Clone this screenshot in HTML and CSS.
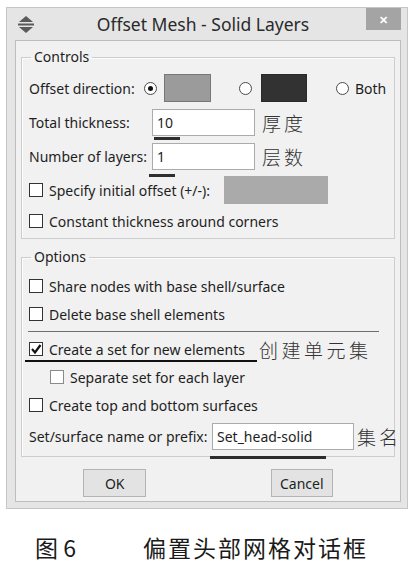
FILE: index.html
```html
<!doctype html>
<html>
<head>
  <meta charset="utf-8">
  <title>Offset Mesh - Solid Layers</title>
  <link rel="stylesheet" href="styles.css">
</head>
<body>
  <div class="page">
    <div class="window">
      <div class="titlebar">
        <svg class="app_icon" width="16" height="17" viewBox="0 0 16 17">
          <polygon points="8,0 15,6 1,6" fill="#5a5a5a"/>
          <rect x="0" y="7.5" width="16" height="2" fill="#5a5a5a"/>
          <polygon points="1,11 15,11 8,17" fill="#5a5a5a"/>
        </svg>
        <div class="title">Offset Mesh - Solid Layers</div>
        <div class="close">&#x2715;</div>
      </div>

      <div class="client">
        <fieldset class="group controls">
          <legend>Controls</legend>
          <div class="rows">
            <div class="row">
              <span class="label dir_label">Offset direction:</span>
              <span class="radio checked"></span>
              <span class="swatch light"></span>
              <span class="radio second"></span>
              <span class="swatch dark"></span>
              <span class="radio third"></span>
              <span class="radio_text">Both</span>
            </div>
            <div class="row">
              <span class="label field_label">Total thickness:</span>
              <span class="field small_field">10<i class="mark mark_thick"></i></span>
              <span class="note">厚度</span>
            </div>
            <div class="row">
              <span class="label field_label">Number of layers:</span>
              <span class="field small_field">1<i class="mark mark_layers"></i></span>
              <span class="note">层数</span>
            </div>
            <div class="row">
              <span class="check"></span>
              <span class="check_text">Specify initial offset (+/-):</span>
              <span class="disabled_field"></span>
            </div>
            <div class="row short">
              <span class="check"></span>
              <span class="check_text">Constant thickness around corners</span>
            </div>
          </div>
        </fieldset>

        <fieldset class="group options">
          <legend>Options</legend>
          <div class="rows">
            <div class="row short">
              <span class="check"></span>
              <span class="check_text">Share nodes with base shell/surface</span>
            </div>
            <div class="row short">
              <span class="check"></span>
              <span class="check_text">Delete base shell elements</span>
            </div>
            <div class="separator"></div>
            <div class="row short set_row">
              <span class="check">
                <svg width="12" height="12" viewBox="0 0 12 12"><path d="M2 6 L5 9.5 L10.5 2" fill="none" stroke="#111" stroke-width="2.2"/></svg>
              </span>
              <span class="check_text">Create a set for new elements</span>
              <span class="note wide">创建单元集</span>
              <i class="mark mark_set"></i>
            </div>
            <div class="row short indent">
              <span class="check light_check"></span>
              <span class="check_text">Separate set for each layer</span>
            </div>
            <div class="row short">
              <span class="check"></span>
              <span class="check_text">Create top and bottom surfaces</span>
            </div>
            <div class="row">
              <span class="label name_label">Set/surface name or prefix:</span>
              <span class="field name_field">Set_head-solid<i class="mark mark_name"></i></span>
              <span class="note wide">集名</span>
            </div>
          </div>
        </fieldset>

        <div class="buttons">
          <span class="button ok">OK</span>
          <span class="button">Cancel</span>
        </div>
      </div>
    </div>

    <div class="caption">
      <span class="fig_no">图 6</span>
      <span class="fig_title">偏置头部网格对话框</span>
    </div>
  </div>
</body>
</html>
```

FILE: styles.css
```css
* {
  box-sizing: border-box;
}
body {
  margin: 0;
  background: #fff;
  font-family: "Noto Sans", "Liberation Sans", sans-serif;
  font-size: 14px;
  color: #1e1e1e;
}
.page {
  padding: 7px 0 0 6px;
}

/* window frame */
.window {
  width: 402px;
  height: 502px;
  background: #e5e5e5;
  border: 1px solid #c6c6c6;
  padding: 0 6px 6px 8px;
  display: flex;
  flex-direction: column;
}
.titlebar {
  height: 32px;
  display: flex;
  align-items: center;
}
.app_icon {
  margin-left: 3px;
  flex: none;
}
.title {
  flex: 1;
  text-align: center;
  font-size: 17.5px;
  color: #2a2a2a;
  padding-left: 6px;
  white-space: nowrap;
}
.close {
  align-self: flex-start;
  width: 35px;
  height: 22px;
  background: #a4a4a4;
  color: #fff;
  font-size: 11px;
  font-weight: bold;
  display: flex;
  align-items: center;
  justify-content: center;
}
.client {
  flex: 1;
  background: #f1f1f1;
  border: 1px solid #bdbdbd;
  padding: 0 5px;
  display: flex;
  flex-direction: column;
}

/* groups */
.group {
  margin: 0;
  padding: 0 7px 6px 7px;
  border: 1px solid #cdcdcd;
  box-shadow: inset 1px 1px 0 #fbfbfb;
  min-width: 0;
}
.group legend {
  padding: 0 3px;
  margin-left: 2px;
  line-height: 16px;
}
.controls {
  margin-top: 8px;
}
.options {
  margin-top: 10px;
}
.rows {
  display: flex;
  flex-direction: column;
  gap: 6px;
  padding-top: 9px;
}
.options .rows {
  padding-top: 10px;
}
.row {
  height: 28px;
  display: flex;
  align-items: center;
  position: relative;
  white-space: nowrap;
}
.row > * {
  flex: none;
}
.row.short {
  height: 22px;
}
.indent {
  padding-left: 21px;
}

/* offset direction */
.dir_label {
  width: 115px;
}
.radio {
  width: 13px;
  height: 13px;
  border: 1px solid #4a4a4a;
  border-radius: 50%;
  background: #fff;
  display: flex;
  align-items: center;
  justify-content: center;
}
.radio.checked::after {
  content: "";
  width: 5px;
  height: 5px;
  border-radius: 50%;
  background: #111;
}
.radio.second {
  margin-left: 28px;
}
.radio.third {
  margin-left: 29px;
}
.swatch {
  width: 47px;
  height: 28px;
  margin-left: 7px;
  border: 1px solid #777;
}
.swatch.light {
  background: #9b9b9b;
}
.swatch.dark {
  width: 46px;
  margin-left: 9px;
  background: #323232;
  border-color: #2a2a2a;
}
.radio_text {
  margin-left: 6px;
}

/* text fields */
.field_label {
  width: 123px;
}
.field {
  position: relative;
  height: 27px;
  background: #fff;
  border: 1px solid #ababab;
  padding-left: 4px;
  display: flex;
  align-items: center;
}
.small_field {
  width: 103px;
}
.name_label {
  width: 183px;
}
.name_field {
  width: 142px;
}
.disabled_field {
  width: 104px;
  height: 28px;
  margin-left: auto;
  margin-right: 59px;
  background: #aaa;
}
.note {
  margin-left: 7px;
  font-family: "Noto Sans CJK SC", sans-serif;
  font-size: 19px;
  font-weight: 300;
  letter-spacing: 3px;
  color: #333;
}
.note.wide {
  margin-left: 3px;
  letter-spacing: 3px;
}
.set_row .note {
  margin-left: 14px;
  letter-spacing: 3.5px;
}

/* annotation underlines */
.mark {
  position: absolute;
  height: 3px;
  background: #2e2e2e;
}
.mark_thick {
  left: 1px;
  top: 27px;
  width: 26px;
}
.mark_layers {
  left: -4px;
  top: 30px;
  width: 26px;
}
.mark_name {
  left: -3px;
  top: 32px;
  width: 116px;
}
.mark_set {
  left: -4px;
  top: 22px;
  width: 232px;
  height: 2px;
  background: #111;
}

/* check boxes */
.check {
  width: 14px;
  height: 14px;
  border: 1px solid #333;
  background: #fff;
  display: flex;
  align-items: center;
  justify-content: center;
}
.light_check {
  border-color: #8a8a8a;
}
.check_text {
  margin-left: 6px;
}
.separator {
  height: 1px;
  margin: 0 8px 0 -1px;
  background: #6e6e6e;
}

/* buttons */
.buttons {
  margin-top: 12px;
  display: flex;
  justify-content: space-around;
}
.button {
  width: 62px;
  height: 28px;
  background: #e3e3e3;
  border: 1px solid #b4b4b4;
  display: flex;
  align-items: center;
  justify-content: center;
}
.button.ok {
  width: 63px;
}

/* figure caption */
.caption {
  margin-top: 21px;
  display: flex;
  align-items: center;
  font-family: "Noto Sans CJK SC", sans-serif;
  font-size: 23px;
  color: #1a1a1a;
}
.fig_no {
  margin-left: 29px;
  width: 108px;
}
.fig_title {
  letter-spacing: 2px;
}
```
